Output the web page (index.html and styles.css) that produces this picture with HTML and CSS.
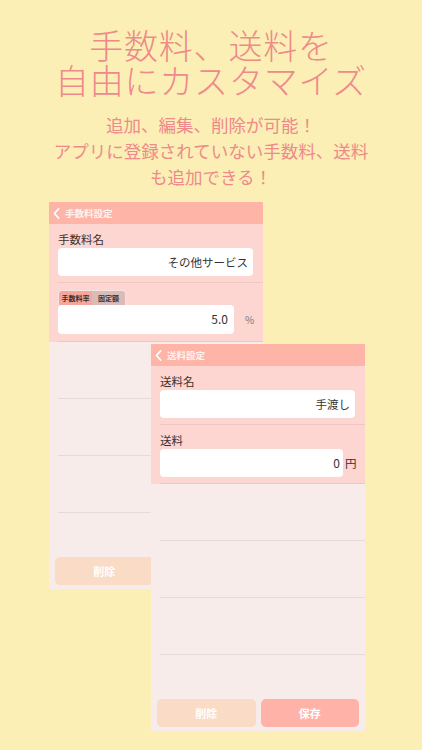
FILE: index.html
```html
<!DOCTYPE html>
<html lang="ja">
<head>
  <meta charset="UTF-8" />
  <title>手数料、送料を自由にカスタマイズ</title>
  <link rel="stylesheet" href="styles.css">
</head>
<body>

  <header class="hero">
    <h1><span>手数料、送料を</span><span>自由にカスタマイズ</span></h1>
    <p>追加、編集、削除が可能！<br>アプリに登録されていない手数料、送料<br>も追加できる！</p>
  </header>

  <div class="stage">

    <!-- 手数料設定 -->
    <section class="card card-fee">
      <div class="card-head">
        <svg class="back" width="7" height="11" viewBox="0 0 7 11"><path d="M5.5 1 L1.5 5.5 L5.5 10" /></svg>
        <span>手数料設定</span>
      </div>
      <div class="fields">
        <div class="field">
          <div class="label">手数料名</div>
          <div class="input-row"><div class="input">その他サービス</div></div>
        </div>
        <div class="field">
          <div class="seg"><span class="on">手数料率</span><span>固定額</span></div>
          <div class="input-row">
            <div class="input short">5.0</div>
            <span class="unit pct">%</span>
          </div>
        </div>
      </div>
      <div class="rows">
        <div class="row"></div>
        <div class="row"></div>
        <div class="row"></div>
      </div>
      <div class="buttons">
        <div class="btn btn-del">削除</div>
        <div class="btn btn-save">保存</div>
      </div>
    </section>

    <!-- 送料設定 -->
    <section class="card card-ship">
      <div class="card-head">
        <svg class="back" width="7" height="11" viewBox="0 0 7 11"><path d="M5.5 1 L1.5 5.5 L5.5 10" /></svg>
        <span>送料設定</span>
      </div>
      <div class="fields">
        <div class="field">
          <div class="label">送料名</div>
          <div class="input-row"><div class="input">手渡し</div></div>
        </div>
        <div class="field">
          <div class="label">送料</div>
          <div class="input-row">
            <div class="input yen">0</div>
            <span class="unit">円</span>
          </div>
        </div>
      </div>
      <div class="rows">
        <div class="row"></div>
        <div class="row"></div>
        <div class="row"></div>
      </div>
      <div class="buttons">
        <div class="btn btn-del">削除</div>
        <div class="btn btn-save">保存</div>
      </div>
    </section>

  </div>

</body>
</html>
```

FILE: styles.css
```css
html, body {
  margin: 0;
  padding: 0;
  background: #fcefb5;
  font-family: "Noto Sans CJK JP", "Noto Sans", sans-serif;
  width: 422px;
  height: 750px;
  overflow: hidden;
}

.hero {
  height: 190px;
  box-sizing: border-box;
  padding-top: 27px;
  text-align: center;
  color: #ee8a8a;
}

.hero h1 {
  margin: 0;
  font-size: 34px;
  font-weight: 300;
  letter-spacing: 0.8px;
}
.hero h1 span {
  display: block;
  height: 35px;
  line-height: 35px;
}

.hero p {
  margin: 15px 0 0;
  font-size: 17.5px;
  line-height: 26px;
}

.stage {
  position: relative;
  height: 560px;
}

/* screenshots placed on the canvas */
.card {
  position: absolute;
  width: 214px;
  height: 387px;
  background: #f8ecea;
  display: flex;
  flex-direction: column;
}
.card-fee { left: 49px; top: 12px; }
.card-ship { left: 151px; top: 154px; }

.card-head {
  height: 22px;
  background: #ffb4a8;
  display: flex;
  align-items: center;
  padding-left: 4px;
  gap: 5px;
  color: #fff3ef;
  font-size: 9.5px;
  font-weight: 700;
}
.back {
  fill: none;
  stroke: #fff;
  stroke-width: 1.8;
  stroke-linecap: round;
  stroke-linejoin: round;
}

.fields {
  background: #fdd6d1;
}
.field {
  margin-left: 9px;
  padding: 7px 0 6px;
  border-bottom: 1px solid #efc6c1;
  height: 45px;
}
.label {
  font-size: 11.5px;
  line-height: 16px;
  color: #3a3232;
  margin-bottom: 1px;
}
.input-row {
  display: flex;
  align-items: center;
}
.input {
  width: 195px;
  height: 28px;
  box-sizing: border-box;
  background: #fff;
  border-radius: 4px;
  text-align: right;
  padding-right: 5px;
  font-size: 11.5px;
  line-height: 28px;
  color: #333;
}
.input.short { width: 176px; font-size: 12px; padding-right: 6px; height: 29px; }
.input.yen { width: 183px; font-size: 12px; padding-right: 3px; }
.unit {
  margin-left: 2px;
  font-size: 11.5px;
  color: #333;
}
.unit.pct {
  margin-left: 11px;
  color: #777;
  font-size: 10px;
}

.seg {
  display: flex;
  width: fit-content;
  height: 15px;
  box-sizing: border-box;
  border: 1px solid #f6e2de;
  border-bottom: none;
  border-radius: 4px 4px 0 0;
  overflow: hidden;
  font-size: 7px;
  line-height: 14px;
  font-weight: 700;
  color: #3a3030;
  margin-bottom: 0;
}
.seg span {
  display: block;
  width: 33px;
  text-align: center;
  background: #d9bcb8;
}
.seg span.on {
  background: #f5a79e;
}

.rows {
  flex: 1;
}
.row {
  height: 56px;
  margin-left: 9px;
  border-bottom: 1px solid #e6dbda;
}

.buttons {
  display: flex;
  gap: 5px;
  padding: 0 6px 4px;
}
.btn {
  flex: 1;
  height: 28px;
  border-radius: 5px;
  display: flex;
  align-items: center;
  justify-content: center;
  color: #fff;
  font-size: 11px;
  font-weight: 700;
}
.btn-del { background: #fadbc6; }
.btn-save { background: #ffb3a8; }
```
